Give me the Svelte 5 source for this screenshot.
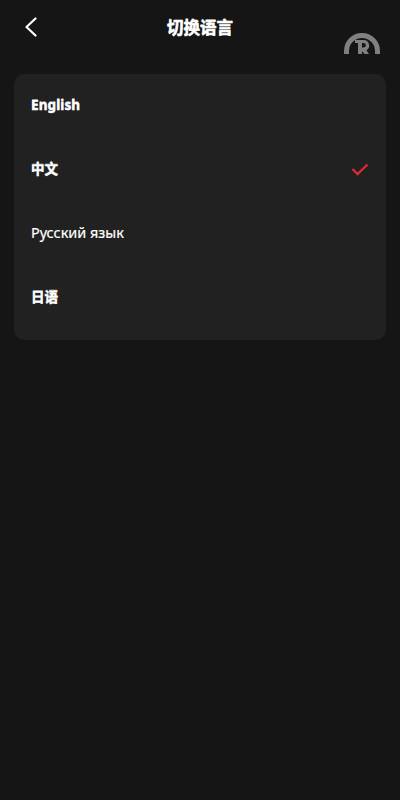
<script>
  const langs = [
    { name: 'English', cls: 'fx' },
    { name: '中文', cls: 'fx', on: true },
    { name: 'Русский язык', cls: 'plain' },
    { name: '日语', cls: 'fx' }
  ];
</script>

<div class="page">
  <header class="bar">
    <svg class="back" width="14" height="20" viewBox="0 0 14 20" fill="none">
      <path d="M11.500 1.500 2.500 10l9 8.500" stroke="#fff" stroke-width="2.200" stroke-linecap="round" stroke-linejoin="round"/>
    </svg>
    <h1 class="title">切换语言</h1>
    <svg class="logo" width="36" height="21" viewBox="0 0 36 21" fill="none">
      <path d="M2.500 21v-3a15.500 15.500 0 0 1 31 0v3" stroke="#808080" stroke-width="5"/>
      <path d="M11 7h8.500a5.500 5.500 0 0 1 3 10.200L25 21h-4.500l-3-3.500H18V21h-4V10h-3z" fill="#808080"/>
      <path d="M18 10h1.500a2 2 0 0 1 0 4.500H18z" fill="#151515"/>
    </svg>
  </header>
  <ul class="card">
    {#each langs as l}
      <li class="row">
        <span class="label {l.cls}">{l.name}</span>
        {#if l.on}
          <svg width="18" height="14" viewBox="0 0 18 14" fill="none">
            <path d="M1.500 6 6.500 11 16.500 1.500" stroke="#dc2a30" stroke-width="2.400"/>
          </svg>
        {/if}
      </li>
    {/each}
  </ul>
</div>

<style>
  :global(body) {
    margin: 0;
    background: #151515;
  }
  .page {
    height: 800px;
    background: #151515;
    color: #fff;
    font-family: "Noto Sans", "Noto Sans CJK SC", sans-serif;
    padding: 0 14px;
    box-sizing: border-box;
    overflow: hidden;
  }
  .bar {
    position: relative;
    height: 74px;
    display: flex;
    justify-content: center;
  }
  .back {
    position: absolute;
    left: 10px;
    top: 17px;
  }
  .title {
    margin: 16px 0 0;
    font-size: 16.500px;
    line-height: 24px;
    font-weight: 700;
    color: #fff;
    -webkit-text-stroke: 0.5px #fff;
    text-shadow: 0 -1px 0 #777;
  }
  .logo {
    position: absolute;
    right: 6px;
    top: 33px;
  }
  .card {
    list-style: none;
    margin: 0;
    padding: 0 0 10px;
    background: #212121;
    border-radius: 10px;
  }
  .row {
    height: 64px;
    padding: 0 17px;
    display: flex;
    align-items: center;
    justify-content: space-between;
  }
  .label {
    font-size: 14.400px;
    line-height: 20px;
  }
  .plain {
    margin-top: -2px;
    -webkit-text-stroke: 0.2px #fff;
  }
  .fx {
    font-weight: 700;
    font-size: 13.500px;
    letter-spacing: 0.1px;
    margin-top: -2px;
    -webkit-text-stroke: 0.4px #fff;
    text-shadow: 0 -1px 0 #777;
  }
</style>
